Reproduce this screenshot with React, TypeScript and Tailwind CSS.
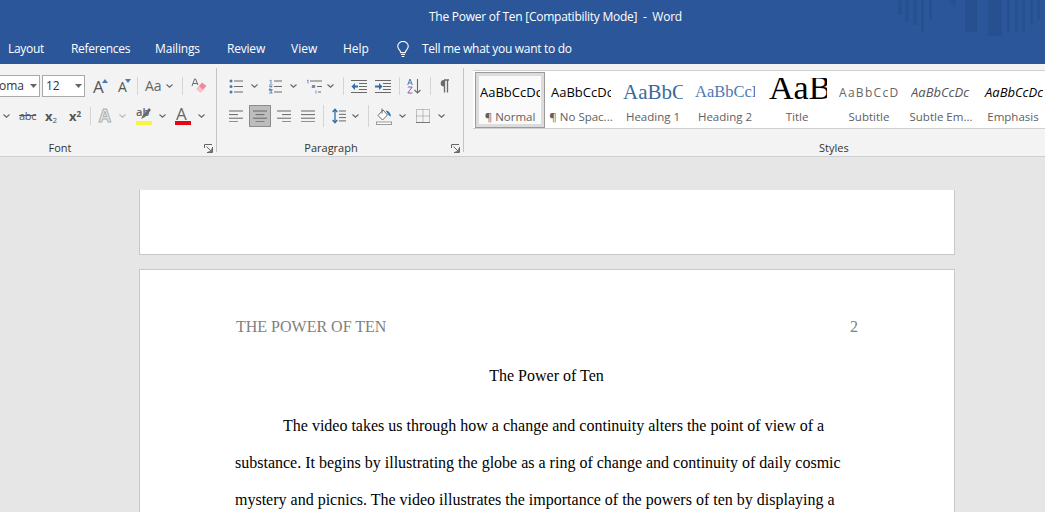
import React from "react";

const bars: [number, number, number][] = [
  [898, 4, 15], [905, 4, 22], [913, 4, 25], [921, 3, 32], [929, 3, 20],
  [965, 12, 32], [988, 14, 36], [1007, 3, 32], [1015, 3, 32], [1022, 3, 32], [1030, 3, 25], [1037, 3, 20],
];

function Watermark() {
  return (
    <svg className="absolute right-0 top-0" width="147" height="36" viewBox="898 0 147 36">
      {bars.map(([x, w, h]) => (
        <rect key={x} x={x} y={0} width={w} height={h} fill="#254e8c" fillOpacity="0.75" />
      ))}
      <path d="M949 0h7l-1 9z" fill="#254e8c" fillOpacity="0.6" />
    </svg>
  );
}

function Chev({ className = "" }: { className?: string }) {
  return (
    <svg className={`shrink-0 self-center ${className}`} width="7" height="4" viewBox="0 0 7 4">
      <path d="M.5.5 3.5 3.2 6.5.5" fill="none" stroke="#666" strokeWidth="1.1" />
    </svg>
  );
}

function Sep({ className = "" }: { className?: string }) {
  return <div className={`w-px shrink-0 self-stretch bg-[#d4d4d4] ${className}`} />;
}

function Launcher({ className = "" }: { className?: string }) {
  return (
    <svg className={`shrink-0 self-center ${className}`} width="9" height="9" viewBox="0 0 9 9">
      <path d="M.5 4V.5H8M2.5 2.5 7.5 7.5M4.5 7.700H7.700V4.500M8.500 3v5.500H3" fill="none" stroke="#666" strokeWidth="1" />
    </svg>
  );
}

function Bullets({ className = "" }: { className?: string }) {
  return (
    <svg className={`shrink-0 self-center ${className}`} width="14" height="15" viewBox="0 0 14 15">
      {[2, 7.5, 13].map((y) => (
        <g key={y}>
          <circle cx="2" cy={y} r="1.5" fill="#4a7ab0" />
          <rect x="5" y={y - 0.5} width="9" height="1" fill="#6a6a6a" />
        </g>
      ))}
    </svg>
  );
}

function Numbering({ className = "" }: { className?: string }) {
  return (
    <svg className={`shrink-0 self-center ${className}`} width="14" height="15" viewBox="0 0 14 15">
      <path d="M1.500 2 3 1v4M1 6h3.500M1 7.500h3l-3 3h3.500M1 11.500h3.200L2.500 13l1.800 1H1" fill="none" stroke="#4a7ab0" strokeWidth=".8" />
      {[2, 7.5, 13].map((y) => (
        <rect key={y} x="6" y={y - 0.5} width="8" height="1" fill="#6a6a6a" />
      ))}
    </svg>
  );
}

function Multilevel({ className = "" }: { className?: string }) {
  return (
    <svg className={`shrink-0 self-center ${className}`} width="16" height="15" viewBox="0 0 16 15">
      <path d="M1 1.500 2 1v3.500M6 6.500h3v1H6v1h3M10 11.500v3" fill="none" stroke="#4a7ab0" strokeWidth=".8" />
      <rect x="4" y="1.500" width="12" height="1" fill="#6a6a6a" />
      <rect x="11" y="7" width="5" height="1" fill="#6a6a6a" />
      <rect x="12" y="12.500" width="3" height="1" fill="#6a6a6a" />
    </svg>
  );
}

function Indent({ flip = false, className = "" }: { flip?: boolean; className?: string }) {
  return (
    <svg className={`shrink-0 self-center ${className}`} width="16" height="13" viewBox="0 0 16 13">
      {[0, 3, 6, 9, 12].map((y) => (
        <rect key={y} x={y === 0 || y === 12 ? 0 : 8} y={y} width={y === 0 || y === 12 ? 16 : 8} height="1" fill="#6a6a6a" />
      ))}
      {flip ? (
        <path d="M0 5.500h4V3l3.500 3.500L4 10V7.500H0z" fill="#2f6ea8" />
      ) : (
        <path d="M7 5.500H4V3L.5 6.500 4 10V7.500h3z" fill="#2f6ea8" />
      )}
    </svg>
  );
}

function Sort({ className = "" }: { className?: string }) {
  return (
    <svg className={`shrink-0 self-center ${className}`} width="14" height="16" viewBox="0 0 14 16">
      <path d="M.7 7 3 1l2.300 6M1.500 5h3" fill="none" stroke="#4a7ab0" strokeWidth="1" />
      <path d="M.8 9h4.400L.8 15h4.600" fill="none" stroke="#8a5fb0" strokeWidth="1" />
      <path d="M10.500 1v14M7.500 12l3 3 3-3" fill="none" stroke="#6a6a6a" strokeWidth="1.100" />
    </svg>
  );
}

function Pilcrow({ className = "" }: { className?: string }) {
  return (
    <svg className={`shrink-0 self-center ${className}`} width="11" height="14" viewBox="0 0 11 14">
      <path d="M5 1H10M5.500 1v12.500M8.500 1v12.500" fill="none" stroke="#6a6a6a" strokeWidth="1.300" />
      <path d="M5 1a3.200 3.200 0 0 0 0 6.600z" fill="#6a6a6a" />
    </svg>
  );
}

function LineSpacing({ className = "" }: { className?: string }) {
  return (
    <svg className={`shrink-0 self-center ${className}`} width="14" height="16" viewBox="0 0 14 16">
      <path d="M3 1.500v13M.6 4 3 1.300 5.400 4M.6 12 3 14.700 5.400 12" fill="none" stroke="#2f6ea8" strokeWidth="1.300" />
      {[3, 6.3, 9.6, 12.9].map((y) => (
        <rect key={y} x="7" y={y - 0.5} width="7" height="1" fill="#6a6a6a" />
      ))}
    </svg>
  );
}

function Shading({ className = "" }: { className?: string }) {
  return (
    <svg className={`shrink-0 self-center ${className}`} width="16" height="17" viewBox="0 0 16 17">
      <path d="M7 2 2 7.500 6.500 12 11.500 7z" fill="#fff" stroke="#6a6a6a" strokeWidth="1" />
      <path d="M6 .5v5" stroke="#6a6a6a" strokeWidth="1" />
      <path d="M9.500 2.500c3 .3 5.300 2.500 5.500 6-1.500-.5-2.700-1.500-3.200-2.800z" fill="#2f6ea8" />
      <rect x=".5" y="14" width="15" height="2.500" fill="#fff" stroke="#9a9a9a" strokeWidth="1" />
    </svg>
  );
}

function Borders({ className = "" }: { className?: string }) {
  return (
    <svg className={`shrink-0 self-center ${className}`} width="14" height="14" viewBox="0 0 14 14">
      <path d="M.5.5h13v13H.5zM7 .5v13M.5 7h13" fill="none" stroke="#8a8a8a" strokeWidth="1" strokeDasharray="1 1" />
      <rect x="0" y="13" width="14" height="1" fill="#777" />
    </svg>
  );
}

function Eraser({ className = "" }: { className?: string }) {
  return (
    <svg className={`shrink-0 self-center ${className}`} width="16" height="16" viewBox="0 0 16 16">
      <path d="M1 8 3.600 1h1l2.400 6M2 5.500h4" fill="none" stroke="#6a6a6a" strokeWidth="1" />
      <path d="M11 4.500 15.500 8l-6 6.500-4-3.500z" fill="#ef8a9b" />
      <path d="M5.500 11 8 8.200l4 3.400-2.500 2.900z" fill="#f7c2cb" />
    </svg>
  );
}

function Highlighter({ className = "" }: { className?: string }) {
  return (
    <div className={`relative h-[18px] w-[16px] shrink-0 self-center ${className}`}>
      <span className="absolute left-0 top-[-2px] text-[11px] font-semibold leading-[14px] text-[#666]">ab</span>
      <svg className="absolute left-[4px] top-0" width="12" height="13" viewBox="0 0 12 13">
        <path d="M1 12 3 8l6-7 2 2-6 7z" fill="#6a6a6a" />
      </svg>
      <div className="absolute bottom-0 left-0 h-[4px] w-[16px] bg-[#f9f53e]" />
    </div>
  );
}

function FontColor({ className = "" }: { className?: string }) {
  return (
    <div className={`relative h-[18px] w-[16px] shrink-0 self-center ${className}`}>
      <span className="absolute left-[1px] top-[-3px] text-[17px] leading-[19px] text-[#666]">A</span>
      <div className="absolute bottom-0 left-0 h-[4px] w-[16px] bg-[#e30613]" />
    </div>
  );
}

function Align({ kind, className = "" }: { kind: "l" | "c" | "r" | "j"; className?: string }) {
  const rows: Record<string, [number, number][]> = {
    l: [[0, 14], [0, 9], [0, 14], [0, 9]],
    c: [[0, 14], [2.5, 11.5], [0, 14], [2.5, 11.5]],
    r: [[0, 14], [5, 14], [0, 14], [5, 14]],
    j: [[0, 14], [0, 14], [0, 14], [0, 14]],
  };
  return (
    <svg className={`shrink-0 self-center ${className}`} width="14" height="12" viewBox="0 0 14 12">
      {rows[kind].map(([a, b], i) => (
        <rect key={i} x={a} y={i * 3.6 + 0.5} width={b - a} height="1" fill="#666" />
      ))}
    </svg>
  );
}

function Bulb() {
  return (
    <svg className="ml-[27px] shrink-0" width="14" height="17" viewBox="0 0 16 19">
      <path d="M5.500 13c0-2.500-3.500-3.500-3.500-7.200a6 5.500 0 0 1 12 0c0 3.700-3.500 4.700-3.500 7.200z" fill="none" stroke="#fff" strokeWidth="1.300" />
      <path d="M5.700 15.200h4.600M6.500 17.500h3" stroke="#fff" strokeWidth="1.300" />
    </svg>
  );
}

function StyleItem({ label, preview, selected = false }: { label: string; preview: React.ReactNode; selected?: boolean }) {
  const body = (
    <>
      <div className="flex h-[27px] w-[60px] items-center overflow-hidden whitespace-nowrap pt-[3px]">{preview}</div>
      <div className="mt-[4px] whitespace-nowrap text-[11.5px] leading-[15px] text-[#606060]">{label}</div>
    </>
  );
  if (selected) {
    return (
      <div className="ml-[2px] h-[56px] w-[70px] shrink-0 border border-[#9a9a9a] text-center">
        <div className="flex h-full flex-col items-center border-[3px] border-[#dcdcdc] bg-[#fafafa] pt-[2px]">{body}</div>
      </div>
    );
  }
  return <div className="flex h-[56px] w-[72px] shrink-0 flex-col items-center pt-[6px]">{body}</div>;
}

export default function App() {
  const ui = "font-['Open_Sans','Noto_Sans',sans-serif]";
  return (
    <div className={`flex h-[512px] w-[1045px] flex-col overflow-hidden bg-[#e6e6e6] ${ui}`}>
      <div className="relative flex h-[34px] shrink-0 items-center bg-[#2b579a] pl-[429px] text-[12px] text-white">
        <Watermark />
        <span className="relative whitespace-pre tracking-[-0.25px]">The Power of Ten [Compatibility Mode]  -  Word</span>
      </div>

      <div className="flex h-[30px] shrink-0 items-center bg-[#2b579a] text-[12px] text-white">
        <span className="ml-[8px] w-[37px] tracking-[-0.3px]">Layout</span>
        <span className="ml-[26px] w-[58px] whitespace-nowrap tracking-[-0.3px]">References</span>
        <span className="ml-[26px] w-[46px] tracking-[-0.15px]">Mailings</span>
        <span className="ml-[26px] w-[38px] tracking-[-0.2px]">Review</span>
        <span className="ml-[26px] w-[26px]">View</span>
        <span className="ml-[26px] w-[26px]">Help</span>
        <Bulb />
        <span className="ml-[12px] whitespace-nowrap tracking-[-0.3px]">Tell me what you want to do</span>
      </div>

      <div className="flex h-[93px] shrink-0 overflow-hidden border-b border-[#cfcfcf] bg-[#f3f3f3] text-[#444]">
        {/* Font */}
        <div className="flex w-[216px] shrink-0 flex-col pt-[11px]">
          <div className="flex h-[23px] items-stretch">
            <div className="flex w-[40px] shrink-0 items-center border border-l-0 border-[#a9a9a9] bg-white text-[12px]">
              <span className="-ml-[1px] text-[#333]">oma</span>
              <svg className="ml-[6px]" width="7" height="4" viewBox="0 0 7 4"><path d="M0 0h7L3.500 4z" fill="#666" /></svg>
            </div>
            <div className="ml-[2px] flex w-[43px] shrink-0 items-center border border-[#a9a9a9] bg-white pl-[3px] text-[12px] text-[#333]">
              <span>12</span>
              <svg className="ml-[15px]" width="7" height="4" viewBox="0 0 7 4"><path d="M0 0h7L3.500 4z" fill="#666" /></svg>
            </div>
            <div className="relative ml-[8px] flex w-[14px] shrink-0 items-end">
              <span className="text-[17px] leading-[21px] text-[#555]">A</span>
              <svg className="absolute -right-[1px] top-[4px]" width="6" height="4" viewBox="0 0 6 4"><path d="M3 0l3 4H0z" fill="#4a7ab0" /></svg>
            </div>
            <div className="relative ml-[11px] flex w-[12px] shrink-0 items-end">
              <span className="text-[14px] leading-[20px] text-[#555]">A</span>
              <svg className="absolute -right-[1px] top-[4px]" width="6" height="4" viewBox="0 0 6 4"><path d="M0 0h6L3 4z" fill="#4a7ab0" /></svg>
            </div>
            <Sep className="ml-[7px] my-[2px]" />
            <span className="ml-[7px] w-[15px] shrink-0 self-center whitespace-nowrap text-[14px] leading-[20px] text-[#666]">Aa</span>
            <Chev className="ml-[6px]" />
            <Sep className="ml-[9px] my-[2px]" />
            <Eraser className="ml-[8px]" />
          </div>
          <div className="mt-[8px] flex h-[22px] items-stretch">
            <Chev className="ml-[3px]" />
            <span className="ml-[9px] w-[16px] shrink-0 self-center text-[11px] leading-[16px] tracking-[-0.3px] text-[#555] line-through">abc</span>
            <span className="ml-[10px] w-[12px] shrink-0 self-center whitespace-nowrap text-[13px] font-bold leading-[16px] text-[#555]">x<sub className="text-[8px] font-normal">2</sub></span>
            <span className="ml-[12px] w-[13px] shrink-0 self-center whitespace-nowrap text-[13px] font-bold leading-[16px] text-[#555]">x<sup className="text-[8px] font-bold">2</sup></span>
            <Sep className="ml-[8px] my-[2px]" />
            <span className="ml-[8px] w-[13px] shrink-0 self-center text-[17px] font-bold leading-[20px] text-[#e8e8e8] [-webkit-text-stroke:1px_#b0b0b0]">A</span>
            <Chev className="ml-[7px] opacity-40" />
            <Highlighter className="ml-[10px]" />
            <Chev className="ml-[7px]" />
            <FontColor className="ml-[9px]" />
            <Chev className="ml-[7px]" />
          </div>
          <div className="mt-[13px] flex h-[16px] items-center">
            <span className="w-[120px] text-center text-[11px] text-[#333]">Font</span>
            <Launcher className="ml-[84px]" />
          </div>
        </div>
        <div className="my-[4px] w-px shrink-0 bg-[#c4c4c4]" />

        {/* Paragraph */}
        <div className="flex w-[246px] shrink-0 flex-col pt-[11px]">
          <div className="flex h-[23px] items-stretch">
            <Bullets className="ml-[12px]" />
            <Chev className="ml-[8px]" />
            <Numbering className="ml-[10px]" />
            <Chev className="ml-[8px]" />
            <Multilevel className="ml-[9px]" />
            <Chev className="ml-[5px]" />
            <Sep className="ml-[9px] my-[2px]" />
            <Indent className="ml-[7px]" />
            <Indent flip className="ml-[8px]" />
            <Sep className="ml-[8px] my-[2px]" />
            <Sort className="ml-[7px]" />
            <Sep className="ml-[9px] my-[2px]" />
            <Pilcrow className="ml-[8px]" />
          </div>
          <div className="mt-[8px] flex h-[22px] items-stretch">
            <Align kind="l" className="ml-[12px]" />
            <div className="ml-[6px] flex w-[22px] shrink-0 items-center justify-center border border-[#8c8c8c] bg-[#bdbdbd]">
              <Align kind="c" />
            </div>
            <Align kind="r" className="ml-[6px]" />
            <Align kind="j" className="ml-[10px]" />
            <Sep className="ml-[8px]" />
            <LineSpacing className="ml-[8px]" />
            <Chev className="ml-[6px]" />
            <Sep className="ml-[9px]" />
            <Shading className="ml-[7px]" />
            <Chev className="ml-[7px]" />
            <Borders className="ml-[10px]" />
            <Chev className="ml-[8px]" />
          </div>
          <div className="mt-[13px] flex h-[16px] items-center">
            <span className="w-[228px] text-center text-[11px] text-[#333]">Paragraph</span>
            <Launcher className="ml-[6px]" />
          </div>
        </div>
        <div className="my-[4px] w-px shrink-0 bg-[#c4c4c4]" />

        {/* Styles */}
        <div className="flex w-[738px] shrink-0 flex-col pt-[6px]">
          <div className="ml-[9px] flex h-[59px] items-center border-y border-[#cfcfcf] bg-white">
            <StyleItem selected label="¶ Normal" preview={<span className="text-[13px] text-black">AaBbCcDc</span>} />
            <StyleItem label="¶ No Spac..." preview={<span className="text-[13px] text-black">AaBbCcDc</span>} />
            <StyleItem label="Heading 1" preview={<span className="font-['Liberation_Serif',serif] text-[21px] text-[#3a6a9e]">AaBbC</span>} />
            <StyleItem label="Heading 2" preview={<span className="font-['Liberation_Serif',serif] text-[16.500px] text-[#4a7cb0]">AaBbCcI</span>} />
            <StyleItem label="Title" preview={<span className="mb-[11px] ml-[2px] font-['Liberation_Serif',serif] text-[34px] leading-[27px] text-black">AaB</span>} />
            <StyleItem label="Subtitle" preview={<span className="text-[12px] tracking-[1.3px] text-[#666]">AaBbCcD</span>} />
            <StyleItem label="Subtle Em..." preview={<span className="text-[13px] italic text-[#555]">AaBbCcDc</span>} />
            <StyleItem label="Emphasis" preview={<span className="ml-[2px] text-[13px] italic text-black">AaBbCcDc</span>} />
          </div>
          <div className="mt-[11px] w-[738px] pl-[369px] text-[11px] leading-[16px] text-[#333]">
            <span className="-ml-[14px] block">Styles</span>
          </div>
        </div>
      </div>

      {/* Document */}
      <div className="flex min-h-0 flex-1 flex-col overflow-hidden pl-[139px] font-['Liberation_Serif',serif]">
        <div className="mt-[33px] h-[65px] w-[816px] shrink-0 border border-t-0 border-[#c8c8c8] bg-white" />
        <div className="mt-[14px] w-[816px] shrink-0 border border-b-0 border-[#c8c8c8] bg-white pb-[20px] pl-[95px] pr-[96px] pt-[47px] text-[16px] text-black">
          <div className="flex h-[20px] items-center justify-between pl-[1px] text-[#7f7f7f]">
            <span>THE POWER OF TEN</span>
            <span>2</span>
          </div>
          <div className="mt-[27px] text-center leading-[24px]">The Power of Ten</div>
          <p className="mt-[20px] indent-12 leading-[36.8px]">
            The video takes us through how a change and continuity alters the point of view of a substance. It begins by illustrating the globe as a ring of change and continuity of daily cosmic mystery and picnics. The video illustrates the importance of the powers of ten by displaying a
          </p>
        </div>
      </div>
    </div>
  );
}
